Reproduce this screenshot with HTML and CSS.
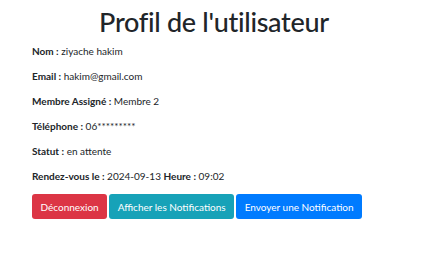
FILE: index.html
```html
<!DOCTYPE html>
<html lang="fr">
<head>
<meta charset="UTF-8">
<meta name="viewport" content="width=device-width, initial-scale=1.0">
<title>Profil de l'utilisateur</title>
<link rel="stylesheet" href="styles.css">
</head>
<body>
<div class="container">
    <h1>Profil de l'utilisateur</h1>
    <p><strong>Nom :</strong> ziyache hakim</p>
    <p><strong>Email :</strong> hakim@gmail.com</p>
    <p><strong>Membre Assigné :</strong> Membre 2</p>
    <p><strong>Téléphone :</strong> 06*********</p>
    <p><strong>Statut :</strong> en attente</p>
    <p><strong>Rendez-vous le :</strong> 2024-09-13 <strong>Heure :</strong> 09:02</p>
    <div class="button-container">
        <button class="btn btn-danger">Déconnexion</button>
        <button class="btn btn-info">Afficher les Notifications</button>
        <button class="btn btn-primary">Envoyer une Notification</button>
    </div>
</div>
</body>
</html>
```

FILE: styles.css
```css
body {
    font-family: Lato, "Noto Sans", Arial, sans-serif;
    margin: 0;
    padding: 0;
    color: #212529;
    background-color: #fff;
}

.container {
    padding: 6px 32px;
}

h1 {
    text-align: center;
    font-size: 27px;
    font-weight: 500;
    letter-spacing: -0.3px;
    margin: 0 0 6px 0;
    line-height: 1.2;
}

p {
    font-size: 10px;
    line-height: 15px;
    margin: 0 0 10px 0;
}

strong {
    font-weight: bold;
}

.button-container {
    display: flex;
    gap: 2px;
    margin-top: 2px;
}

.btn {
    font-family: inherit;
    font-size: 10px;
    color: #fff;
    border: none;
    border-radius: 3px;
    height: 25px;
    padding: 0 8.5px;
    cursor: pointer;
}

.btn-danger {
    background-color: #dc3545;
}

.btn-info {
    background-color: #17a2b8;
}

.btn-primary {
    background-color: #007bff;
}
```
